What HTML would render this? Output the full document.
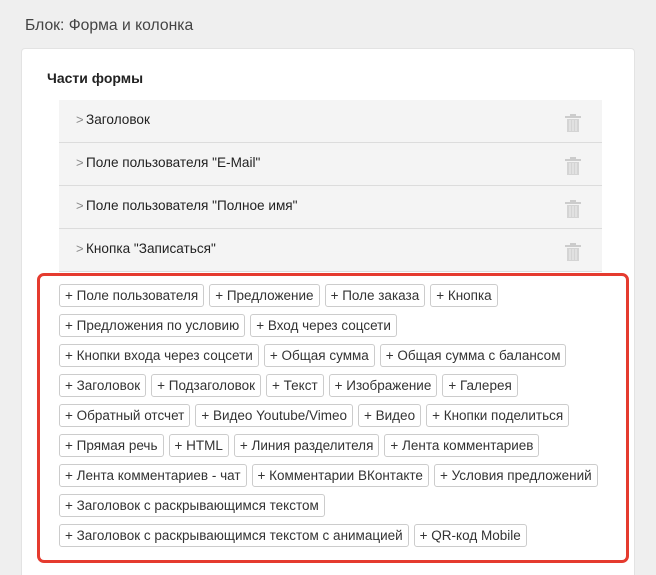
<!DOCTYPE html>
<html><head><meta charset="utf-8"><style>
*{box-sizing:border-box;margin:0;padding:0}
html,body{width:656px;height:575px;overflow:hidden}
body{background:#efefef;font-family:"Liberation Sans",sans-serif;color:#333;position:relative}
.title{position:absolute;left:25px;top:17px;font-size:15.7px;color:#444}
.card{position:absolute;left:21px;top:48px;width:614px;height:527px;background:#fff;border:1px solid #e3e3e3;border-bottom:none;border-radius:4px 4px 0 0}
.h{position:absolute;left:47px;top:70px;font-size:14px;font-weight:bold;color:#222}
.row{position:absolute;left:59px;width:543px;height:42px;background:#f4f4f4;font-size:13.6px;color:#222}
.row span.c{position:absolute;left:17px;top:12px;color:#888;font-size:13px}
.row span.t{position:absolute;left:27px;top:12px}
.row svg{position:absolute;left:506px;top:13px}
.sep{position:absolute;left:59px;width:543px;height:1px;background:#dcdcdc}
.red{position:absolute;left:37px;top:273px;width:592px;height:290px;border:3px solid #e53b2f;border-radius:7px}
.bl{position:absolute;left:59px;display:flex;gap:5px}
.b{height:23px;line-height:21px;border:1px solid #ccc;border-radius:3px;padding:0 5px;font-size:13.5px;color:#333;white-space:nowrap;background:#fff}
</style></head><body>
<div class="title">Блок: Форма и колонка</div>
<div class="card"></div>
<div class="h">Части формы</div>
<div class="row" style="top:100px"><span class="c">&gt;</span><span class="t">Заголовок</span><svg width="16" height="19" viewBox="0 0 16 19"><rect x="0" y="3" width="16" height="2" fill="#ccc"/><rect x="5" y="1" width="6" height="2" fill="#ccc"/><rect x="2" y="6" width="12" height="13" fill="#d4d4d4"/><path d="M5 7v11M8 7v11M11 7v11" stroke="#eee" stroke-width="1"/></svg></div>
<div class="sep" style="top:142px"></div>
<div class="row" style="top:143px"><span class="c">&gt;</span><span class="t">Поле пользователя "E-Mail"</span><svg width="16" height="19" viewBox="0 0 16 19"><rect x="0" y="3" width="16" height="2" fill="#ccc"/><rect x="5" y="1" width="6" height="2" fill="#ccc"/><rect x="2" y="6" width="12" height="13" fill="#d4d4d4"/><path d="M5 7v11M8 7v11M11 7v11" stroke="#eee" stroke-width="1"/></svg></div>
<div class="sep" style="top:185px"></div>
<div class="row" style="top:186px"><span class="c">&gt;</span><span class="t">Поле пользователя "Полное имя"</span><svg width="16" height="19" viewBox="0 0 16 19"><rect x="0" y="3" width="16" height="2" fill="#ccc"/><rect x="5" y="1" width="6" height="2" fill="#ccc"/><rect x="2" y="6" width="12" height="13" fill="#d4d4d4"/><path d="M5 7v11M8 7v11M11 7v11" stroke="#eee" stroke-width="1"/></svg></div>
<div class="sep" style="top:228px"></div>
<div class="row" style="top:229px"><span class="c">&gt;</span><span class="t">Кнопка "Записаться"</span><svg width="16" height="19" viewBox="0 0 16 19"><rect x="0" y="3" width="16" height="2" fill="#ccc"/><rect x="5" y="1" width="6" height="2" fill="#ccc"/><rect x="2" y="6" width="12" height="13" fill="#d4d4d4"/><path d="M5 7v11M8 7v11M11 7v11" stroke="#eee" stroke-width="1"/></svg></div>
<div class="sep" style="top:271px"></div>
<div class="red"></div>
<div class="bl" style="top:284px"><div class="b">+ Поле пользователя</div><div class="b">+ Предложение</div><div class="b">+ Поле заказа</div><div class="b">+ Кнопка</div></div>
<div class="bl" style="top:314px"><div class="b">+ Предложения по условию</div><div class="b">+ Вход через соцсети</div></div>
<div class="bl" style="top:344px"><div class="b">+ Кнопки входа через соцсети</div><div class="b">+ Общая сумма</div><div class="b">+ Общая сумма с балансом</div></div>
<div class="bl" style="top:374px"><div class="b">+ Заголовок</div><div class="b">+ Подзаголовок</div><div class="b">+ Текст</div><div class="b">+ Изображение</div><div class="b">+ Галерея</div></div>
<div class="bl" style="top:404px"><div class="b">+ Обратный отсчет</div><div class="b">+ Видео Youtube/Vimeo</div><div class="b">+ Видео</div><div class="b">+ Кнопки поделиться</div></div>
<div class="bl" style="top:434px"><div class="b">+ Прямая речь</div><div class="b">+ HTML</div><div class="b">+ Линия разделителя</div><div class="b">+ Лента комментариев</div></div>
<div class="bl" style="top:464px"><div class="b">+ Лента комментариев - чат</div><div class="b">+ Комментарии ВКонтакте</div><div class="b">+ Условия предложений</div></div>
<div class="bl" style="top:494px"><div class="b">+ Заголовок с раскрывающимся текстом</div></div>
<div class="bl" style="top:524px"><div class="b">+ Заголовок с раскрывающимся текстом с анимацией</div><div class="b">+ QR-код Mobile</div></div>
</body></html>
